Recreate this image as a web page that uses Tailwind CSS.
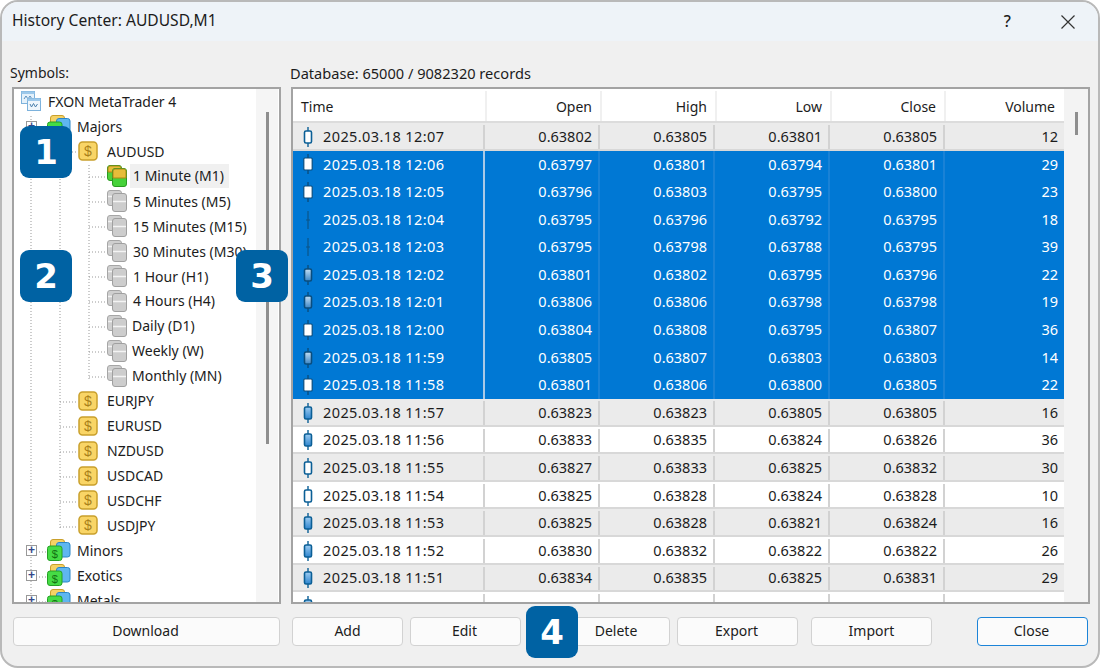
<!DOCTYPE html>
<html lang="en">
<head>
    <meta charset="UTF-8">
    <title>History Center</title>
    <script src="https://cdn.jsdelivr.net/npm/@tailwindcss/browser@4"></script>
</head>
<body class="bg-white">
    <svg class="absolute w-0 h-0">
        <defs>
            <linearGradient id="body-blue" x1="0" y1="0" x2="0" y2="1">
                <stop offset="0" stop-color="#9fcdf2"/>
                <stop offset="1" stop-color="#2f86cf"/>
            </linearGradient>
            <linearGradient id="body-mid" x1="0" y1="0" x2="0" y2="1">
                <stop offset="0" stop-color="#c4def3"/>
                <stop offset="1" stop-color="#3b86c6"/>
            </linearGradient>
        </defs>
        <symbol id="db-gray" viewBox="0 0 20 22">
            <rect x="0.500" y="0.500" width="14" height="15" rx="2.500" fill="#cfcfcf" stroke="#a6a6a6"/>
            <path d="M1 6.500H5" stroke="#f2f2f2" stroke-width="1.500"/>
            <rect x="5.500" y="3.500" width="14" height="18" rx="2.500" fill="#cdcdcd" stroke="#a0a0a0"/>
            <path d="M6 11.500H19" stroke="#f4f4f4" stroke-width="1.500"/>
        </symbol>
        <symbol id="db-gold" viewBox="0 0 20 22">
            <rect x="0.500" y="0.500" width="14" height="15" rx="2.500" fill="#4fd13c" stroke="#2b9a22"/>
            <path d="M1 7V3a2 2 0 0 1 2-2H12a2 2 0 0 1 2 2V7Z" fill="#e6bd3a" stroke="#a98916"/>
            <rect x="5.500" y="3.500" width="14" height="18" rx="2.500" fill="#46d23a" stroke="#2b9a22"/>
            <path d="M6 13V6a2 2 0 0 1 2-2H17a2 2 0 0 1 2 2V13Z" fill="#e6bd3a" stroke="#a98916"/>
        </symbol>
        <symbol id="root" viewBox="0 0 20 20">
            <rect x="0.500" y="0.500" width="13" height="12" fill="#e4f1fb" stroke="#7db2dc"/>
            <rect x="0.500" y="0.500" width="13" height="2.500" fill="#9cc8ea"/>
            <path d="M3 8l2-3 2 3 2-3 2 3" fill="none" stroke="#5a90bd"/>
            <rect x="6.500" y="7.500" width="13" height="12" fill="#eef6fc" stroke="#7db2dc"/>
            <rect x="6.500" y="7.500" width="13" height="2.500" fill="#9cc8ea"/>
            <path d="M9 13l1.500 3 2-3.500 2 3.500 2-3" fill="none" stroke="#4a80ad"/>
        </symbol>
        <symbol id="candle-hollow" viewBox="0 0 10 20">
            <path d="M5 0V20" stroke="#0b5f96" stroke-width="1.400"/>
            <rect x="1.500" y="4" width="7" height="12" rx="1.500" fill="#fff" stroke="#0b5f96" stroke-width="1.600"/>
        </symbol>
        <symbol id="candle-white" viewBox="0 0 10 20">
            <path d="M5 0V20" stroke="#0a4d7e" stroke-width="1.400"/>
            <rect x="0.800" y="4" width="8.400" height="12" rx="1" fill="#fff" stroke="#0a4d7e" stroke-width="1.200"/>
        </symbol>
        <symbol id="candle-blue" viewBox="0 0 10 20">
            <path d="M5 0V20" stroke="#0b5f96" stroke-width="1.400"/>
            <rect x="1.500" y="4" width="7" height="12" rx="1.500" fill="url(#body-blue)" stroke="#0b5f96" stroke-width="1.600"/>
        </symbol>
        <symbol id="candle-mid" viewBox="0 0 10 20">
            <path d="M5 0V20" stroke="#0a4d7e" stroke-width="1.400"/>
            <rect x="1.500" y="4" width="7" height="12" rx="1.500" fill="url(#body-mid)" stroke="#0a4d7e" stroke-width="1.600"/>
        </symbol>
        <symbol id="candle-doji" viewBox="0 0 10 20">
            <path d="M5 1V19" stroke="#0b5588" stroke-width="1.200"/>
            <path d="M3 10H7" stroke="#0b5588"/>
        </symbol>
    </svg>

    <div class="w-[1100px] h-[668px] flex flex-col bg-[#f0f0f0] border-2 border-[#b9b9b9] rounded-[18px] overflow-hidden text-[14px] text-[#1c1c1c] font-['Noto_Sans',sans-serif]">
        <div class="h-[39px] shrink-0 flex items-center bg-[#eef3f8] pl-[10px]">
            <span class="text-[15.600px] -mt-[2px]">History Center: AUDUSD,M1</span>
            <span class="ml-auto mr-[50px] text-[16px] font-medium -mt-[2px]">?</span>
            <svg class="w-[14px] h-[14px] mr-[23px]" viewBox="0 0 14 14"><path d="M0.500 0.500L13.500 13.500M13.500 0.500L0.500 13.500" stroke="#333" stroke-width="1.200"/></svg>
        </div>

        <div class="flex-1 flex gap-[10px] pl-[10px] pr-[8px]">
            <!-- symbols tree -->
            <div class="w-[269px] flex flex-col">
                <div class="h-[46px] flex items-end pb-[4px] leading-[20px] -ml-[2px]">Symbols:</div>
                <div class="relative h-[517px] flex bg-white border-2 border-[#a3a3a3] overflow-hidden">
                    <svg class="absolute left-0 top-0" width="240" height="513" fill="none" stroke="#999" stroke-dasharray="1 2">
                        <path d="M17 27V513"/>
                        <path d="M46 63V440"/>
                        <path d="M75 76V290"/>
                        <path d="M46 63H62"/>
                        <path d="M75 88H92M75 113H92M75 138H92M75 163H92M75 188H92M75 213H92M75 238H92M75 263H92M75 288H92"/>
                        <path d="M46 313H62M46 338H62M46 363H62M46 388H62M46 413H62M46 438H62"/>
                        <path d="M22 463H32M22 488H32M22 513H32"/>
                    </svg>
                    <div id="tree" class="relative w-[242px] shrink-0 overflow-hidden"></div>
                    <div class="w-[22px] shrink-0 bg-[#f5f5f5] pt-[23px] flex justify-center">
                        <div class="w-[3px] h-[332px] bg-[#8e8e8e]"></div>
                    </div>
                </div>
                <button class="mt-[13px] mx-[1px] h-[29px] pb-[2px] pr-[2px] bg-[#fbfbfb] border border-[#d2d2d2] rounded-[4px]">Download</button>
            </div>

            <!-- records table -->
            <div class="w-[799px] flex flex-col">
                <div class="h-[46px] flex items-end pb-[4px] leading-[20px] -ml-[1px] text-[14.600px]">Database: 65000 / 9082320 records</div>
                <div class="h-[517px] flex bg-white border-2 border-[#a3a3a3] overflow-hidden">
                    <div class="w-[771px] shrink-0 overflow-hidden">
                        <div class="h-[34px] pt-[2px] grid grid-cols-[192px_115px_115px_115px_114px_120px] items-stretch border-b-2 border-[#dcdcdc]">
                            <div class="flex items-center pl-[8px]">Time</div>
                            <div class="flex items-center justify-end pr-[8px] border-l-2 border-[#f0f0f0]">Open</div>
                            <div class="flex items-center justify-end pr-[8px] border-l-2 border-[#f0f0f0]">High</div>
                            <div class="flex items-center justify-end pr-[8px] border-l-2 border-[#f0f0f0]">Low</div>
                            <div class="flex items-center justify-end pr-[8px] border-l-2 border-[#f0f0f0]">Close</div>
                            <div class="flex items-center justify-end pr-[9px] border-l-2 border-[#f0f0f0]">Volume</div>
                        </div>
                        <div id="rows"></div>
                    </div>
                    <div class="flex-1 bg-[#f3f3f3] pt-[23px] flex justify-center">
                        <div class="w-[3px] h-[23px] bg-[#8e8e8e]"></div>
                    </div>
                </div>
                <div class="mt-[13px] h-[29px] flex">
                    <button class="w-[111px] ml-[1px] pb-[2px] bg-[#fbfbfb] border border-[#d2d2d2] rounded-[4px]">Add</button>
                    <button class="w-[111px] ml-[7px] pb-[2px] pr-[2px] bg-[#fbfbfb] border border-[#d2d2d2] rounded-[4px]">Edit</button>
                    <button class="w-[106px] ml-[43px] pb-[2px] pr-[2px] bg-[#fbfbfb] border border-[#d2d2d2] rounded-[4px]">Delete</button>
                    <button class="w-[121px] ml-[7px] pb-[2px] pr-[2px] bg-[#fbfbfb] border border-[#d2d2d2] rounded-[4px]">Export</button>
                    <button class="w-[121px] ml-[13px] pb-[2px] bg-[#fbfbfb] border border-[#d2d2d2] rounded-[4px]">Import</button>
                    <button class="w-[111px] ml-[45px] pb-[2px] pr-[2px] bg-[#fbfbfb] border-[1.500px] border-[#1c84d8] rounded-[4px]">Close</button>
                </div>
            </div>
        </div>
    </div>

    <!-- numbered callouts -->
    <div class="absolute left-[20px] top-[126px] w-[52px] h-[52px] rounded-[9px] bg-[#0062a3] text-white flex items-center justify-center text-[34px] font-bold font-['DejaVu_Sans',sans-serif]">1</div>
    <div class="absolute left-[20px] top-[250px] w-[52px] h-[52px] rounded-[9px] bg-[#0062a3] text-white flex items-center justify-center text-[34px] font-bold font-['DejaVu_Sans',sans-serif]">2</div>
    <div class="absolute left-[236px] top-[250px] w-[52px] h-[52px] rounded-[9px] bg-[#0062a3] text-white flex items-center justify-center text-[34px] font-bold font-['DejaVu_Sans',sans-serif]">3</div>
    <div class="absolute left-[526px] top-[606px] w-[52px] h-[52px] rounded-[9px] bg-[#0062a3] text-white flex items-center justify-center text-[34px] font-bold font-['DejaVu_Sans',sans-serif]">4</div>

    <script>
        const plus = `<span class="absolute left-[12px] w-[11px] h-[11px] bg-white border border-[#999] text-[#33478a] flex items-center justify-center text-[12px] leading-none font-bold font-['Liberation_Sans',sans-serif]">+</span>`;

        const coinIcon = `<svg class="w-[20px] h-[20px] mr-[9px] shrink-0" viewBox="0 0 20 20">
            <rect x="1" y="1" width="18" height="18" rx="3.500" fill="#f9d566" stroke="#c9a02c" stroke-width="1.500"/>
            <text x="10" y="15" text-anchor="middle" font-size="14" font-family="Liberation Sans" fill="#a9801a">$</text>
        </svg>`;
        const groupIcon = `<svg class="w-[24px] h-[22px] mr-[6px] shrink-0" viewBox="0 0 24 22">
            <rect x="3.500" y="0.500" width="14" height="12" rx="2.500" fill="#f5d265" stroke="#c9a02c"/>
            <rect x="9.500" y="3.500" width="13.500" height="14.500" rx="2.500" fill="#5fb6f0" stroke="#2a86c8"/>
            <rect x="0.500" y="7" width="14.500" height="14.500" rx="2.500" fill="#45dc45" stroke="#25a025"/>
            <text x="7.700" y="18.500" text-anchor="middle" font-size="11" font-family="Liberation Sans" fill="#126f12">$</text>
        </svg>`;
        const useIcon = (id, box) => `<svg class="${box} shrink-0"><use href="#${id}"/></svg>`;

        const groupItem = label => ({ label, pad: "pl-[33px]", icon: groupIcon, expander: true });
        const coinItem = label => ({ label, pad: "pl-[64px]", icon: coinIcon });
        const tfItem = (label, gap = "mr-[6px]") => ({ label, pad: "pl-[93px]", icon: useIcon("db-gray", `w-[20px] h-[22px] ${gap}`) });

        const treeItems = [
            { label: "FXON MetaTrader 4", pad: "pl-[7px]", icon: useIcon("root", "w-[20px] h-[20px] mr-[7px]") },
            groupItem("Majors"),
            coinItem("AUDUSD"),
            { label: "1 Minute (M1)", pad: "pl-[93px]", icon: useIcon("db-gold", "w-[20px] h-[22px] mr-[6px]"), active: true },
            tfItem("5 Minutes (M5)"),
            tfItem("15 Minutes (M15)"),
            tfItem("30 Minutes (M30)"),
            tfItem("1 Hour (H1)"),
            tfItem("4 Hours (H4)"),
            tfItem("Daily (D1)", "mr-[5px]"),
            tfItem("Weekly (W)", "mr-[5px]"),
            tfItem("Monthly (MN)", "mr-[5px]"),
            coinItem("EURJPY"),
            coinItem("EURUSD"),
            coinItem("NZDUSD"),
            coinItem("USDCAD"),
            coinItem("USDCHF"),
            coinItem("USDJPY"),
            groupItem("Minors"),
            groupItem("Exotics"),
            groupItem("Metals"),
        ];

        document.getElementById("tree").innerHTML = treeItems.map(t => `
            <div class="relative h-[24.95px] flex items-center whitespace-nowrap ${t.pad}">
                ${t.expander ? plus : ""}
                ${t.icon}
                <span class="${t.active ? "bg-[#f0f0f0] pl-[3px] pr-[5px] -ml-[3px] leading-[24px]" : ""}">${t.label}</span>
            </div>`).join("");

        const records = [
            ["hollow", "12:07", "0.63802", "0.63805", "0.63801", "0.63805", 12],
            ["white", "12:06", "0.63797", "0.63801", "0.63794", "0.63801", 29, 1],
            ["white", "12:05", "0.63796", "0.63803", "0.63795", "0.63800", 23, 1],
            ["doji", "12:04", "0.63795", "0.63796", "0.63792", "0.63795", 18, 1],
            ["doji", "12:03", "0.63795", "0.63798", "0.63788", "0.63795", 39, 1],
            ["mid", "12:02", "0.63801", "0.63802", "0.63795", "0.63796", 22, 1],
            ["mid", "12:01", "0.63806", "0.63806", "0.63798", "0.63798", 19, 1],
            ["white", "12:00", "0.63804", "0.63808", "0.63795", "0.63807", 36, 1],
            ["mid", "11:59", "0.63805", "0.63807", "0.63803", "0.63803", 14, 1],
            ["white", "11:58", "0.63801", "0.63806", "0.63800", "0.63805", 22, 1],
            ["blue", "11:57", "0.63823", "0.63823", "0.63805", "0.63805", 16],
            ["blue", "11:56", "0.63833", "0.63835", "0.63824", "0.63826", 36],
            ["hollow", "11:55", "0.63827", "0.63833", "0.63825", "0.63832", 30],
            ["hollow", "11:54", "0.63825", "0.63828", "0.63824", "0.63828", 10],
            ["blue", "11:53", "0.63825", "0.63828", "0.63821", "0.63824", 16],
            ["blue", "11:52", "0.63830", "0.63832", "0.63822", "0.63822", 26],
            ["blue", "11:51", "0.63834", "0.63835", "0.63825", "0.63831", 29],
            ["blue", "", "", "", "", "", ""],
        ];

        document.getElementById("rows").innerHTML = records.map((r, idx) => {
            const sel = r[7];
            const bg = sel ? "bg-[#0078d4] text-white" : (idx % 2 == 0 ? "bg-[#ebebeb] border-b-2 border-[#d8d8d8] pt-[2px]" : "bg-white border-b-2 border-[#d8d8d8] pt-[2px]");
            const cells = r.slice(2, 7).map((v, i) => {
                const line = !sel ? "border-[#d2d2d2]" : (i == 0 ? "border-[#a9c9e6]" : "border-[#1a82d6]");
                return `<div class="flex items-center justify-end pr-[6px] border-l-2 ${line} text-[14.500px]">${v}</div>`;
            }).join("");
            return `
                <div class="h-[27.6px] grid grid-cols-[190px_115px_115px_115px_115px_121px] ${bg}">
                    <div class="flex items-center pl-[10px] gap-[10px] whitespace-nowrap">
                        <svg class="w-[10px] h-[20px] shrink-0"><use href="#candle-${r[0]}"/></svg>
                        <span class="text-[14.500px] tracking-[0.4px]">${r[1] ? "2025.03.18 " + r[1] : ""}</span>
                    </div>
                    ${cells}
                </div>`;
        }).join("");
    </script>
</body>
</html>
